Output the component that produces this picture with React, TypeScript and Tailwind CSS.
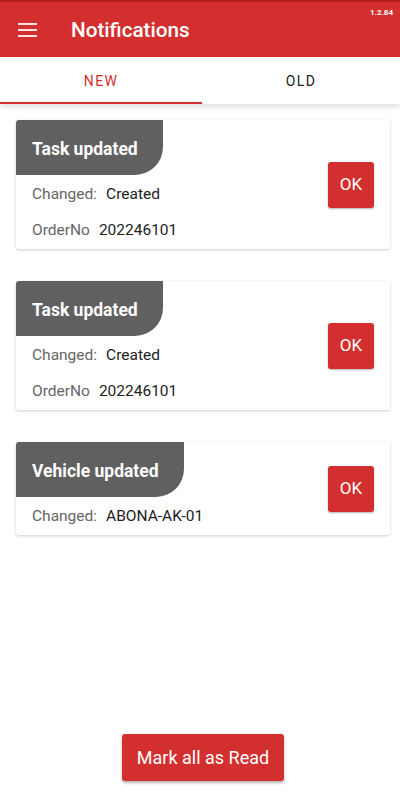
import React, { useState } from 'react';

interface Notice {
  id: number;
  title: string;
  rows: { label: string; value: string }[];
}

const notices: Notice[] = [
  {
    id: 1,
    title: 'Task updated',
    rows: [
      { label: 'Changed:', value: 'Created' },
      { label: 'OrderNo', value: '202246101' },
    ],
  },
  {
    id: 2,
    title: 'Task updated',
    rows: [
      { label: 'Changed:', value: 'Created' },
      { label: 'OrderNo', value: '202246101' },
    ],
  },
  {
    id: 3,
    title: 'Vehicle updated',
    rows: [{ label: 'Changed:', value: 'ABONA-AK-01' }],
  },
];

const NoticeCard: React.FC<{ notice: Notice }> = ({ notice }) => (
  <div className="flex items-center bg-white rounded-[3px] shadow-[0_1px_3px_rgba(0,0,0,0.2)]">
    <div className="flex-1">
      <div className="inline-flex items-center h-[55px] pl-4 pr-[25px] pt-[3px] bg-[#606060] rounded-br-[28px] rounded-tl-[3px]">
        <span className="text-white text-[17.5px] font-bold">{notice.title}</span>
      </div>
      <div className="pt-[2px]">
        {notice.rows.map((r, i) => (
          <div key={i} className="flex items-center h-[36px] pl-4 text-[15.5px]">
            <span className="text-[#666]">{r.label}</span>
            <span className="ml-[9px] text-[#222]">{r.value}</span>
          </div>
        ))}
      </div>
    </div>
    <button className="mr-4 w-[46px] h-[46px] rounded-[3px] bg-[#d32f2f] text-white text-[17px] shadow-[0_1px_2px_rgba(0,0,0,0.3)]">
      OK
    </button>
  </div>
);

export default function App() {
  const [tab, setTab] = useState<'new' | 'old'>('new');

  return (
    <div className="w-[400px] h-[800px] flex flex-col bg-white font-['Roboto',sans-serif]">
      <div className="relative h-[57px] bg-[#d32f2f] border-t-2 border-[#b71c1c] flex items-center">
        <svg width="20" height="14" viewBox="0 0 20 14" className="ml-[18px]">
          <rect x="0" y="0" width="19" height="2" fill="#fbe3e3" />
          <rect x="0" y="6" width="19" height="2" fill="#fbe3e3" />
          <rect x="0" y="12" width="19" height="2" fill="#fbe3e3" />
        </svg>
        <span className="ml-[33px] mt-[3px] text-white text-[20.7px] font-medium">Notifications</span>
        <span className="absolute right-[7px] top-[5px] text-white text-[8px] font-bold">1.2.84</span>
      </div>

      <div className="flex h-[47px] shadow-[0_3px_5px_rgba(0,0,0,0.12)] z-10">
        <button
          onClick={() => setTab('new')}
          className={`w-[202px] flex items-center justify-center pt-[4px] text-[14px] tracking-[1.3px] border-b-2 ${tab === 'new' ? 'text-[#d32f2f] border-[#d32f2f]' : 'text-[#212121] border-transparent'}`}
        >
          NEW
        </button>
        <button
          onClick={() => setTab('old')}
          className={`flex-1 flex items-center justify-center pt-[4px] text-[14px] tracking-[1.3px] border-b-2 ${tab === 'old' ? 'text-[#d32f2f] border-[#d32f2f]' : 'text-[#212121] border-transparent'}`}
        >
          OLD
        </button>
      </div>

      <div className="flex-1 flex flex-col gap-[32px] pl-4 pt-[16px] pr-[10px]">
        {tab === 'new' && notices.map((n) => <NoticeCard key={n.id} notice={n} />)}
      </div>

      <div className="flex justify-center pb-[19px] pl-[6px]">
        <button className="w-[162px] h-[47px] rounded-[3px] bg-[#d32f2f] text-white text-[18px] shadow-[0_2px_3px_rgba(0,0,0,0.3)]">
          Mark all as Read
        </button>
      </div>
    </div>
  );
}
